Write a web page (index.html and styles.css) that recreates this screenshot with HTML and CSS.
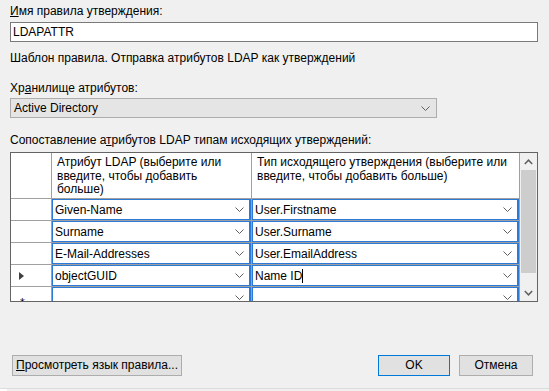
FILE: index.html
```html
<!DOCTYPE html>
<html lang="ru">
<head>
<meta charset="utf-8">
<title>Правило утверждения</title>
<link rel="stylesheet" href="styles.css">
</head>
<body>
<div class="dialog">
  <div class="lbl"><u>И</u>мя правила утверждения:</div>
  <div class="textbox">LDAPATTR</div>
  <div class="hint">Шаблон правила. Отправка атрибутов LDAP как утверждений</div>
  <div class="lbl lbl-gap">Хр<u>а</u>нилище атрибутов:</div>
  <div class="select">
    <span>Active Directory</span>
    <svg class="chev" width="9" height="5" viewBox="0 0 9 5"><polyline points="0.5,0.5 4.5,4.5 8.5,0.5" fill="none" stroke="#606060" stroke-width="1"/></svg>
  </div>
  <div class="lbl lbl-gap">Сопоставление а<u>т</u>рибутов LDAP типам исходящих утверждений:</div>
  <div class="grid">
    <div class="cols">
      <div class="cell rh"></div>
      <div class="cell hd">Атрибут LDAP (выберите или<br>введите, чтобы добавить<br>больше)</div>
      <div class="cell hd">Тип исходящего утверждения (выберите или<br>введите, чтобы добавить больше)</div>

      <div class="cell rh"></div>
      <div class="cell"><div class="combo"><span>Given-Name</span><svg class="chev" width="9" height="5" viewBox="0 0 9 5"><polyline points="0.5,0.5 4.5,4.5 8.5,0.5" fill="none" stroke="#606060"/></svg></div></div>
      <div class="cell"><div class="combo"><span>User.Firstname</span><svg class="chev" width="9" height="5" viewBox="0 0 9 5"><polyline points="0.5,0.5 4.5,4.5 8.5,0.5" fill="none" stroke="#606060"/></svg></div></div>

      <div class="cell rh"></div>
      <div class="cell"><div class="combo"><span>Surname</span><svg class="chev" width="9" height="5" viewBox="0 0 9 5"><polyline points="0.5,0.5 4.5,4.5 8.5,0.5" fill="none" stroke="#606060"/></svg></div></div>
      <div class="cell"><div class="combo"><span>User.Surname</span><svg class="chev" width="9" height="5" viewBox="0 0 9 5"><polyline points="0.5,0.5 4.5,4.5 8.5,0.5" fill="none" stroke="#606060"/></svg></div></div>

      <div class="cell rh"></div>
      <div class="cell"><div class="combo"><span>E-Mail-Addresses</span><svg class="chev" width="9" height="5" viewBox="0 0 9 5"><polyline points="0.5,0.5 4.5,4.5 8.5,0.5" fill="none" stroke="#606060"/></svg></div></div>
      <div class="cell"><div class="combo"><span>User.EmailAddress</span><svg class="chev" width="9" height="5" viewBox="0 0 9 5"><polyline points="0.5,0.5 4.5,4.5 8.5,0.5" fill="none" stroke="#606060"/></svg></div></div>

      <div class="cell rh"><svg class="arrow" width="5" height="8" viewBox="0 0 5 8"><polygon points="0,0 5,4 0,8" fill="#404040"/></svg></div>
      <div class="cell"><div class="combo"><span>objectGUID</span><svg class="chev" width="9" height="5" viewBox="0 0 9 5"><polyline points="0.5,0.5 4.5,4.5 8.5,0.5" fill="none" stroke="#606060"/></svg></div></div>
      <div class="cell"><div class="combo"><span>Name ID<i class="caret"></i></span><svg class="chev" width="9" height="5" viewBox="0 0 9 5"><polyline points="0.5,0.5 4.5,4.5 8.5,0.5" fill="none" stroke="#606060"/></svg></div></div>

      <div class="cell rh"><span class="star">*</span></div>
      <div class="cell"><div class="combo"><span></span><svg class="chev" width="9" height="5" viewBox="0 0 9 5"><polyline points="0.5,0.5 4.5,4.5 8.5,0.5" fill="none" stroke="#606060"/></svg></div></div>
      <div class="cell"><div class="combo"><span></span><svg class="chev" width="9" height="5" viewBox="0 0 9 5"><polyline points="0.5,0.5 4.5,4.5 8.5,0.5" fill="none" stroke="#606060"/></svg></div></div>
    </div>
    <div class="scrollbar">
      <div class="sb-btn"><svg width="9" height="6" viewBox="0 0 9 6"><polyline points="0.8,5 4.5,1.2 8.2,5" fill="none" stroke="#606060" stroke-width="1.5"/></svg></div>
      <div class="sb-thumb"></div>
      <div class="sb-track"></div>
      <div class="sb-btn"><svg width="9" height="6" viewBox="0 0 9 6"><polyline points="0.8,1 4.5,4.8 8.2,1" fill="none" stroke="#606060" stroke-width="1.5"/></svg></div>
    </div>
  </div>
  <div class="buttons">
    <button class="btn btn-rule"><u>П</u>росмотреть язык правила...</button>
    <div class="right">
      <button class="btn btn-ok">OK</button>
      <button class="btn btn-cancel">Отмена</button>
    </div>
  </div>
</div>
<div class="footer"><div class="footer-white"></div></div>
</body>
</html>
```
FILE: styles.css
```css
* { box-sizing: border-box; }
html, body {
  margin: 0;
  padding: 0;
}
body {
  width: 549px;
  height: 391px;
  overflow: hidden;
  background: #f0f0f0;
  font-family: "Liberation Sans", Arial, sans-serif;
  font-size: 12px;
  color: #000;
}
.dialog {
  padding: 3px 11px 0 10px;
}
.lbl {
  line-height: 16px;
  height: 16px;
  white-space: nowrap;
}
.lbl-gap { margin-top: 14px; }
.textbox {
  margin-top: 3px;
  height: 20px;
  border: 1px solid #7a7a7a;
  background: #fff;
  line-height: 18px;
  padding-left: 2px;
}
.hint {
  margin-top: 8px;
  line-height: 16px;
  height: 16px;
}
.select {
  margin-top: 2px;
  width: 427px;
  height: 20px;
  border: 1px solid #adadad;
  background: #e5e5e5;
  display: flex;
  align-items: center;
  justify-content: space-between;
  padding: 0 6px 0 3px;
}
.grid {
  margin-top: 4px;
  height: 150px;
  border: 1px solid #646464;
  background: #fff;
  display: flex;
  overflow: hidden;
}
.cols {
  flex: 1;
  display: grid;
  grid-template-columns: 41px 200px 1fr;
  grid-template-rows: 46px repeat(5, 22px);
  overflow: hidden;
}
.cell {
  border-right: 1px solid #a0a0a0;
  border-bottom: 1px solid #a0a0a0;
  background: #fff;
  overflow: hidden;
}
.rh {
  display: flex;
  align-items: center;
  padding-left: 8px;
}
.arrow { display: block; }
.star {
  font-size: 12px;
  line-height: 12px;
  margin-top: 10px;
  margin-left: 1px;
}
.hd {
  padding: 3px 0 0 5px;
  line-height: 13.5px;
  color: #000;
  white-space: nowrap;
}
.combo {
  height: 21px;
  border: 1px solid #2c7ad6;
  border-right-width: 2px;
  display: flex;
  align-items: center;
  justify-content: space-between;
  padding: 0 5px 0 2px;
  line-height: 18px;
  white-space: nowrap;
}
.chev { display: block; flex: none; }
.caret {
  display: inline-block;
  width: 1px;
  height: 14px;
  background: #000;
  vertical-align: -3px;
}
.scrollbar {
  width: 17px;
  flex: none;
  background: #f0f0f0;
  display: flex;
  flex-direction: column;
}
.sb-btn {
  height: 17px;
  display: flex;
  align-items: center;
  justify-content: center;
  flex: none;
}
.sb-thumb {
  height: 103px;
  margin: 0 1px;
  background: #cdcdcd;
  flex: none;
}
.sb-track { flex: 1; }
.buttons {
  margin-top: 53px;
  display: flex;
  justify-content: space-between;
  padding: 0 5px 0 2px;
}
.right {
  display: flex;
  gap: 9px;
}
.btn {
  height: 21px;
  border: 1px solid #adadad;
  background: #e1e1e1;
  font-family: "Liberation Sans", Arial, sans-serif;
  font-size: 12px;
  color: #000;
  padding: 0;
  line-height: 19px;
}
.btn-rule { width: 170px; }
.btn-ok { width: 72px; border: 1px solid #0078d7; }
.btn-cancel { width: 74px; }
.footer {
  margin-top: 12px;
  height: 3px;
  border-top: 1px solid #dcdcdc;
  background: #f0f0f0;
}
.footer-white {
  width: 7px;
  height: 2px;
  background: #fff;
}
```
